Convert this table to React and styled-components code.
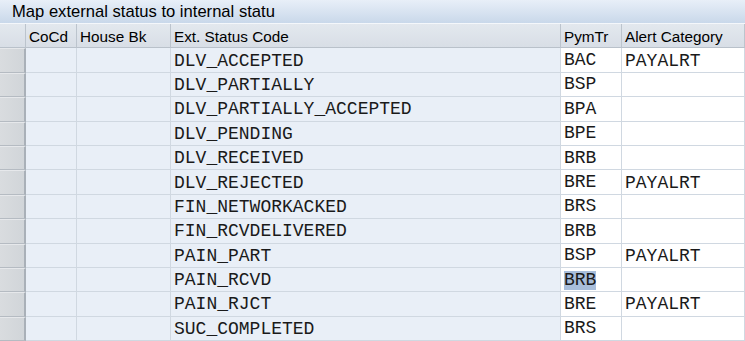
import React from "react";
import styled, { createGlobalStyle } from "styled-components";

const Global = createGlobalStyle`
  html, body {
    margin: 0;
    padding: 0;
    background: #ffffff;
    overflow: hidden;
  }
`;

const rows = [
  ["DLV_ACCEPTED", "BAC", "PAYALRT"],
  ["DLV_PARTIALLY", "BSP", ""],
  ["DLV_PARTIALLY_ACCEPTED", "BPA", ""],
  ["DLV_PENDING", "BPE", ""],
  ["DLV_RECEIVED", "BRB", ""],
  ["DLV_REJECTED", "BRE", "PAYALRT"],
  ["FIN_NETWORKACKED", "BRS", ""],
  ["FIN_RCVDELIVERED", "BRB", ""],
  ["PAIN_PART", "BSP", "PAYALRT"],
  ["PAIN_RCVD", "BRB", "", true],
  ["PAIN_RJCT", "BRE", "PAYALRT"],
  ["SUC_COMPLETED", "BRS", ""],
];

const Panel = styled.div`
  width: 745px;
  height: 341px;
  overflow: hidden;
  background: #ffffff;
`;

const TitleBar = styled.div`
  height: 23px;
  display: flex;
  align-items: center;
  padding-left: 12px;
  background: linear-gradient(#e8eff8, #c9d8ea);
  border-bottom: 1px solid #f4f7fb;
  font-family: "Liberation Sans", Arial, sans-serif;
  font-size: 16.6px;
  color: #000;
  white-space: nowrap;
`;

const Grid = styled.div`
  display: grid;
  grid-template-columns: 26px 51px 94px 390px 61px 1fr;
  grid-auto-rows: 24.4px;
`;

const HeadCell = styled.div`
  box-sizing: border-box;
  display: flex;
  align-items: center;
  padding-left: 3px;
  padding-top: 2px;
  background: linear-gradient(#e3e8ee, #d8dee6);
  border-right: 1px solid #bcc4cd;
  border-bottom: 1px solid #b9c1ca;
  font-family: "Liberation Sans", Arial, sans-serif;
  font-size: 15.3px;
  color: #000;
  white-space: nowrap;
  overflow: hidden;
`;

const Selector = styled.div`
  box-sizing: border-box;
  background: linear-gradient(90deg, #d9dcdf, #d1d5d9);
  border-right: 2px solid #a9b0b8;
  border-bottom: 1px solid #b5bbc2;
  border-top: 1px solid #e6e8eb;
`;

const Cell = styled.div`
  box-sizing: border-box;
  display: flex;
  align-items: center;
  padding-left: 3px;
  padding-top: 1px;
  background: ${(p) => (p.$key ? "#e9eff7" : "#ffffff")};
  border-right: 1px solid #d0d8e1;
  border-bottom: 1px solid #d0d8e1;
  font-family: "Courier New", "Nimbus Mono PS", "Nimbus Mono L", FreeMono,
    "Liberation Mono", monospace;
  font-size: 18px;
  color: #1a1a1a;
  white-space: nowrap;
  overflow: hidden;
`;

const Mark = styled.span`
  background: ${(p) => (p.$on ? "#a8bedb" : "transparent")};
  line-height: 19px;
`;

export default function App() {
  return (
    <>
      <Global />
      <Panel>
        <TitleBar>Map external status to internal statu</TitleBar>
        <Grid>
          <HeadCell />
          <HeadCell>CoCd</HeadCell>
          <HeadCell>House Bk</HeadCell>
          <HeadCell>Ext. Status Code</HeadCell>
          <HeadCell>PymTr</HeadCell>
          <HeadCell>Alert Category</HeadCell>
          {rows.map(([code, pym, alert, sel], i) => (
            <React.Fragment key={i}>
              <Selector />
              <Cell $key />
              <Cell $key />
              <Cell $key>{code}</Cell>
              <Cell>
                <Mark $on={sel}>{pym}</Mark>
              </Cell>
              <Cell>{alert}</Cell>
            </React.Fragment>
          ))}
        </Grid>
      </Panel>
    </>
  );
}
